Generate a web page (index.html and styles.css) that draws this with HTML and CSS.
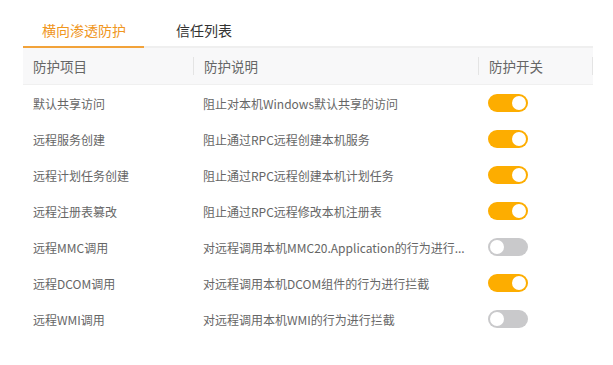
FILE: index.html
```html
<!DOCTYPE html>
<html lang="zh-CN">
<head>
<meta charset="utf-8">
<link rel="stylesheet" href="styles.css">
</head>
<body>
<div class="panel">
  <div class="tabs">
    <div class="tab active">横向渗透防护</div>
    <div class="tab">信任列表</div>
  </div>
  <div class="table">
    <div class="row head">
      <div class="cell c1">防护项目</div>
      <div class="cell c2 sep">防护说明</div>
      <div class="cell c3 sep sep-r">防护开关</div>
    </div>
    <div class="row">
      <div class="cell c1">默认共享访问</div>
      <div class="cell c2">阻止对本机Windows默认共享的访问</div>
      <div class="cell c3"><span class="switch on"></span></div>
    </div>
    <div class="row">
      <div class="cell c1">远程服务创建</div>
      <div class="cell c2">阻止通过RPC远程创建本机服务</div>
      <div class="cell c3"><span class="switch on"></span></div>
    </div>
    <div class="row">
      <div class="cell c1">远程计划任务创建</div>
      <div class="cell c2">阻止通过RPC远程创建本机计划任务</div>
      <div class="cell c3"><span class="switch on"></span></div>
    </div>
    <div class="row">
      <div class="cell c1">远程注册表篡改</div>
      <div class="cell c2">阻止通过RPC远程修改本机注册表</div>
      <div class="cell c3"><span class="switch on"></span></div>
    </div>
    <div class="row">
      <div class="cell c1">远程MMC调用</div>
      <div class="cell c2">对远程调用本机MMC20.Application的行为进行...</div>
      <div class="cell c3"><span class="switch"></span></div>
    </div>
    <div class="row">
      <div class="cell c1">远程DCOM调用</div>
      <div class="cell c2">对远程调用本机DCOM组件的行为进行拦截</div>
      <div class="cell c3"><span class="switch on"></span></div>
    </div>
    <div class="row">
      <div class="cell c1">远程WMI调用</div>
      <div class="cell c2">对远程调用本机WMI的行为进行拦截</div>
      <div class="cell c3"><span class="switch"></span></div>
    </div>
  </div>
</div>
</body>
</html>
```
FILE: styles.css
```css
* { box-sizing: border-box; }
html, body { margin: 0; padding: 0; background: #fff; }
body {
  font-family: "Noto Sans CJK SC", "Microsoft YaHei", sans-serif;
  color: #666;
}
.panel {
  width: 570px;
  margin-left: 23px;
  padding-top: 15px;
}
.tabs {
  display: flex;
  height: 33px;
  border-bottom: 2px solid #efefef;
}
.tab {
  font-size: 14px;
  line-height: 30px;
  color: #333;
  white-space: nowrap;
  padding: 0 18px 0 19px;
  margin-bottom: -2px;
  border-bottom: 2px solid transparent;
}
.tab.active {
  color: #f0961e;
  border-bottom-color: #f2a33a;
}
.tab + .tab { padding-left: 32px; }
.row {
  display: flex;
  height: 36px;
  align-items: center;
  font-size: 12px;
}
.row.head {
  height: 37px;
  background: #f8f8f9;
  font-size: 13.5px;
  border-bottom: 1px solid #f0f0f0;
}
.cell {
  padding-left: 10px;
  white-space: nowrap;
  overflow: hidden;
}
.c1 { width: 170px; }
.c2 { width: 285px; }
.c3 { width: 115px; }
.sep {
  border-left: 1px solid #e4e4e4;
  line-height: 18px;
}
.sep-r { border-right: 1px solid #e4e4e4; }
.switch {
  display: block;
  position: relative;
  width: 40px;
  height: 18px;
  border-radius: 9px;
  background: #c9c9cb;
}
.switch::after {
  content: "";
  position: absolute;
  top: 2px;
  left: 2px;
  width: 14px;
  height: 14px;
  border-radius: 50%;
  background: #fff;
}
.switch.on { background: #fdad00; }
.switch.on::after { left: 24px; }
```
